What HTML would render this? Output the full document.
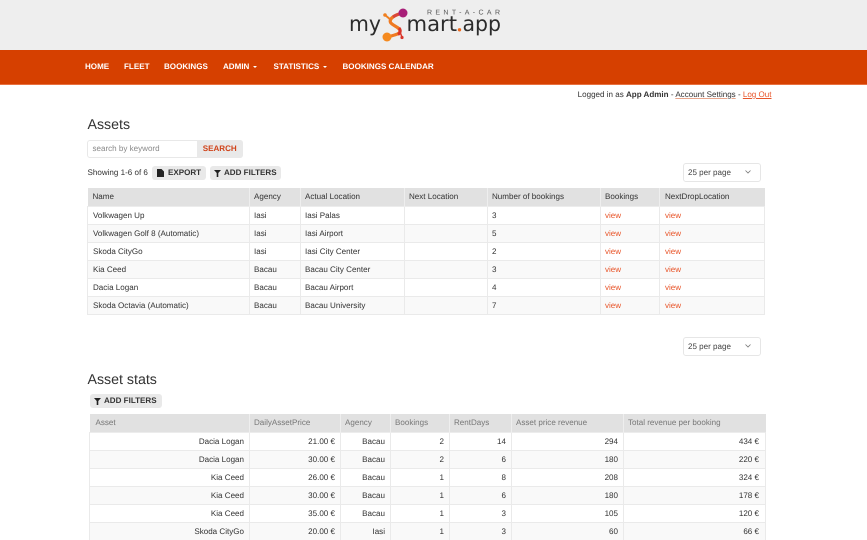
<!DOCTYPE html>
<html><head><meta charset="utf-8">
<style>
*{box-sizing:border-box}
html,body{margin:0;padding:0;width:867px;height:540px;overflow:hidden;background:#fff}
#w{position:absolute;left:0;top:0;width:867px;height:540px;overflow:hidden;background:#fff;font-family:"Liberation Sans",sans-serif;color:#333;font-size:8.05px;text-rendering:geometricPrecision;filter:blur(.25px)}
.a{position:absolute;white-space:nowrap}
#top{position:absolute;left:0;top:0;width:867px;height:49.5px;background:#eee}
#nav{position:absolute;left:0;top:49.5px;width:867px;height:35px;background:#d64000;border-bottom:1px solid #e8703f}
.n{position:absolute;top:62px;color:#fff;font-weight:bold;font-size:8.05px;line-height:10px;white-space:nowrap}
.car{display:inline-block;width:0;height:0;border-left:2.5px solid transparent;border-right:2.5px solid transparent;border-top:2.5px solid #fff;margin-left:3.500px;vertical-align:1px}
h2{position:absolute;margin:0;font-weight:normal;font-size:14.2px;line-height:16px;color:#333}
.btn{position:absolute;background:#e9e9e9;border-radius:3px;height:14px;font-weight:bold;color:#333;font-size:8.05px;line-height:14px;white-space:nowrap}
.sel{position:absolute;width:78px;height:19px;background:#fff;border:1px solid #e6e6e6;border-radius:3px;font-size:8.05px;line-height:17px;padding-left:4px;color:#444}
.sel svg{position:absolute;left:61px;top:6px}
table{position:absolute;border-collapse:collapse;table-layout:fixed;font-size:8.05px}
th{background:#e1e1e1;font-weight:normal;text-align:left;height:18px;padding:1px 0 0 4px;border-left:1px solid #eee;line-height:10px}
td{height:18px;padding:1px 5px 0 4px;border:1px solid #eaeaea;border-top:1px solid #ececec;line-height:10px;white-space:nowrap}
tr:nth-child(even) td{background:#f9f9f9}
th:first-child{border-left:0}
#t1 td{text-align:left}
#t1 td a{color:#e8552a}
#t1 th:first-child,#t1 td:first-child,#t1 th:last-child,#t1 td:last-child{padding-left:5px}
#t2 th{color:#777}
#t2 th:first-child{padding-left:6px}
#t2 td{text-align:right;padding-right:5px}
#t2 td:last-child{padding-right:6px}
</style></head><body><div id="w">
<div id="top"></div>
<svg class="a" style="left:340px;top:5px" width="170" height="40" viewBox="0 0 170 40">
<text x="87" y="9.500" font-family="Liberation Sans" font-size="7" textLength="73" fill="#555">RENT-A-CAR</text>
<text x="9" y="26" font-family="DejaVu Sans" font-size="21" textLength="32" lengthAdjust="spacingAndGlyphs" fill="#2b2b2b">my</text>
<text x="66.500" y="26" font-family="DejaVu Sans" font-size="21" textLength="50.500" lengthAdjust="spacingAndGlyphs" fill="#2b2b2b">mart</text>
<circle cx="119.500" cy="24.800" r="1.700" fill="#ee6a1e"/>
<text x="122.500" y="26" font-family="DejaVu Sans" font-size="21" textLength="38.500" lengthAdjust="spacingAndGlyphs" fill="#2b2b2b">app</text>
<path d="M45 10 L51 15" stroke="#f08020" stroke-width="2"/>
<path d="M63 8 C58 9 54 11 53 12 C50 14 49 17 52 19 C56 22 60 23 60 26 C60 29 55 30 47 32" fill="none" stroke="#ef7a22" stroke-width="3.200"/>
<path d="M63 8 C58 9 55 10.500 53 12" fill="none" stroke="#d9453a" stroke-width="3"/>
<path d="M59 23 C61 25 60.500 28 58 29.500" fill="none" stroke="#d9352a" stroke-width="3"/>
<path d="M60 27 L62 32" stroke="#d9352a" stroke-width="1.500"/>
<circle cx="63" cy="8" r="4.500" fill="#a81f78"/>
<circle cx="47" cy="32" r="4.500" fill="#f58a1f"/>
<circle cx="45" cy="10" r="1.800" fill="#f08020"/>
<circle cx="62" cy="32.500" r="1.600" fill="#d9352a"/>
</svg>
<div id="nav"></div>
<div class="n" style="left:85px">HOME</div>
<div class="n" style="left:124px">FLEET</div>
<div class="n" style="left:164px">BOOKINGS</div>
<div class="n" style="left:223px">ADMIN<span class="car"></span></div>
<div class="n" style="left:273.500px">STATISTICS<span class="car"></span></div>
<div class="n" style="left:342.500px">BOOKINGS CALENDAR</div>

<div class="a" style="right:95.500px;top:89px;line-height:11px;color:#333">Logged in as <b>App Admin</b> - <span style="text-decoration:underline;text-decoration-color:#e8a58c">Account Settings</span> - <span style="color:#e8552a;text-decoration:underline">Log Out</span></div>

<h2 style="left:87.500px;top:116.500px">Assets</h2>
<div class="a" style="left:87px;top:139.500px;width:156px;height:18px;border:1px solid #e8e8e8;border-radius:3px;background:#fff"></div>
<div class="a" style="left:92.500px;top:143px;color:#8a8a8a;line-height:11px">search by keyword</div>
<div class="a" style="left:196.500px;top:139.500px;width:46.500px;height:18px;background:#e9e9e9;border-radius:0 3px 3px 0;color:#d0431a;font-weight:bold;font-size:8.05px;line-height:18px;text-align:center">SEARCH</div>

<div class="a" style="left:87.500px;top:167px;line-height:11px">Showing 1-6 of 6</div>
<div class="btn" style="left:152px;top:166px;width:54px;padding-left:16px">EXPORT
<svg class="a" style="left:5px;top:3px" width="7" height="8" viewBox="0 0 7 8"><path d="M0 0H4.500L7 2.500V8H0Z" fill="#222"/></svg></div>
<div class="btn" style="left:210px;top:166px;width:71px;padding-left:14px">ADD FILTERS
<svg class="a" style="left:4px;top:4px" width="7" height="7" viewBox="0 0 7 7"><path d="M0 0H7L4.300 3V7H2.700V3Z" fill="#222"/></svg></div>
<div class="sel" style="left:683px;top:163px">25 per page<svg width="6" height="4" viewBox="0 0 6 4"><path d="M.5.500L3 3 5.500.500" fill="none" stroke="#777" stroke-width=".8"/></svg></div>

<table id="t1" style="left:87px;top:188px;width:677px">
<colgroup><col style="width:162px"><col style="width:51px"><col style="width:104px"><col style="width:83px"><col style="width:113px"><col style="width:59px"><col style="width:105px"></colgroup>
<thead><tr><th>Name</th><th>Agency</th><th>Actual Location</th><th>Next Location</th><th>Number of bookings</th><th>Bookings</th><th>NextDropLocation</th></tr></thead>
<tbody>
<tr><td>Volkwagen Up</td><td>Iasi</td><td>Iasi Palas</td><td></td><td>3</td><td><a>view</a></td><td><a>view</a></td></tr>
<tr><td>Volkwagen Golf 8 (Automatic)</td><td>Iasi</td><td>Iasi Airport</td><td></td><td>5</td><td><a>view</a></td><td><a>view</a></td></tr>
<tr><td>Skoda CityGo</td><td>Iasi</td><td>Iasi City Center</td><td></td><td>2</td><td><a>view</a></td><td><a>view</a></td></tr>
<tr><td>Kia Ceed</td><td>Bacau</td><td>Bacau City Center</td><td></td><td>3</td><td><a>view</a></td><td><a>view</a></td></tr>
<tr><td>Dacia Logan</td><td>Bacau</td><td>Bacau Airport</td><td></td><td>4</td><td><a>view</a></td><td><a>view</a></td></tr>
<tr><td>Skoda Octavia (Automatic)</td><td>Bacau</td><td>Bacau University</td><td></td><td>7</td><td><a>view</a></td><td><a>view</a></td></tr>
</tbody></table>

<div class="sel" style="left:683px;top:337px">25 per page<svg width="6" height="4" viewBox="0 0 6 4"><path d="M.5.500L3 3 5.500.500" fill="none" stroke="#777" stroke-width=".8"/></svg></div>

<h2 style="left:87.500px;top:371.500px">Asset stats</h2>
<div class="btn" style="left:90px;top:394px;width:72px;padding-left:14px">ADD FILTERS
<svg class="a" style="left:4px;top:4px" width="7" height="7" viewBox="0 0 7 7"><path d="M0 0H7L4.300 3V7H2.700V3Z" fill="#222"/></svg></div>

<table id="t2" style="left:89px;top:414px;width:676px">
<colgroup><col style="width:160px"><col style="width:91px"><col style="width:50px"><col style="width:59px"><col style="width:62px"><col style="width:112px"><col style="width:142px"></colgroup>
<thead><tr><th>Asset</th><th>DailyAssetPrice</th><th>Agency</th><th>Bookings</th><th>RentDays</th><th>Asset price revenue</th><th>Total revenue per booking</th></tr></thead>
<tbody>
<tr><td>Dacia Logan</td><td>21.00 €</td><td>Bacau</td><td>2</td><td>14</td><td>294</td><td>434 €</td></tr>
<tr><td>Dacia Logan</td><td>30.00 €</td><td>Bacau</td><td>2</td><td>6</td><td>180</td><td>220 €</td></tr>
<tr><td>Kia Ceed</td><td>26.00 €</td><td>Bacau</td><td>1</td><td>8</td><td>208</td><td>324 €</td></tr>
<tr><td>Kia Ceed</td><td>30.00 €</td><td>Bacau</td><td>1</td><td>6</td><td>180</td><td>178 €</td></tr>
<tr><td>Kia Ceed</td><td>35.00 €</td><td>Bacau</td><td>1</td><td>3</td><td>105</td><td>120 €</td></tr>
<tr><td>Skoda CityGo</td><td>20.00 €</td><td>Iasi</td><td>1</td><td>3</td><td>60</td><td>66 €</td></tr>
</tbody></table>
</div></body></html>
